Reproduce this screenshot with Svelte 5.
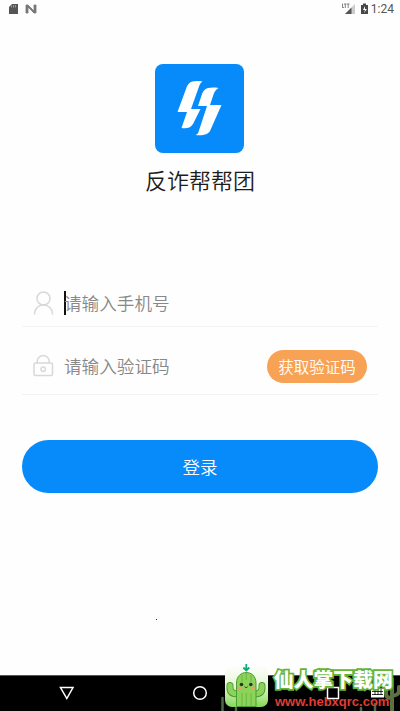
<script>
  let phone = '';
  let code = '';

  function handleSubmit(e) {
    e.preventDefault();
  }
</script>

<div class="screen">
  <header class="status-bar">
    <svg class="status-left" width="40" height="18" viewBox="0 0 40 18">
      <path d="M9 7l3-3h6v10H9z" fill="#555" />
      <path d="M11.500 5.500v2M13.500 5v2.500M15.500 5v2.500" stroke="#aaa" stroke-width=".8" />
      <path d="M26 13V5h2l6 6V5h2v8h-2l-6-6v6z" fill="#777" stroke="#777" stroke-width=".8" />
    </svg>
    <div class="status-right">
      <svg width="32" height="18" viewBox="0 0 32 18">
        <path d="M3.500 3.500v4h1.500M5 4h2.500M6.300 4v4M8 4h2.500M9.200 4v4" stroke="#666" stroke-width=".8" fill="none" />
        <path d="M6 14L16 4v10z" fill="#ccc" />
        <path d="M6 14l6.500-6.500V14z" fill="#555" />
        <path d="M22 5h2V3.500h3V5h2v9h-7z" fill="#484848" />
        <path d="M26 6l-2 4h2l-1 3 3-4h-2z" fill="#fff" />
      </svg>
      <span class="time">1:24</span>
    </div>
  </header>

  <main class="content">
    <div class="logo">
      <svg width="89" height="89" viewBox="0 0 89 89">
        <path d="M47.500 17.500c-6-1-11-.5-13.500 2-1.500 1.500-2.500 3.500-3 5.500L22.500 48H32l-5.500 16c6 .7 9.500-.5 11.500-4l7.500-15H36l7.500-21c1-3 1.500-5 4-6.500z" fill="#fff" />
        <path d="M63.500 24c-6-1-11.500-.5-14 2-1.500 1.500-2.500 3.500-3 5.500L43 42h9l-8.500 26c-.5 1.500-1.500 2.500-3 3 8 .7 12.500-.5 14.500-4L66.500 41H55l3.500-10.500c1-3 2.500-5 5-6.500z" fill="#fff" />
      </svg>
    </div>
    <h1 class="title">反诈帮帮团</h1>

    <form class="login-form" on:submit={handleSubmit}>
      <label class="field">
        <svg class="field-icon" width="22" height="26" viewBox="0 0 22 26" fill="none" stroke="#d8d8d8" stroke-width="1.500">
          <circle cx="11.500" cy="8.500" r="6.500" />
          <path d="M2.500 24.500c0-6 4-9.500 9-9.500s9 3.500 9 9.500" />
        </svg>
        <span class="caret"></span>
        <input type="text" bind:value={phone} placeholder="请输入手机号" />
      </label>
      <label class="field code-field">
        <svg class="field-icon" width="22" height="26" viewBox="0 0 22 26" fill="none" stroke="#d8d8d8" stroke-width="1.500">
          <rect x="2" y="10" width="18.500" height="12.500" rx="1.500" />
          <path d="M5.200 10V8.500a6 6 0 0 1 12 0V10" />
          <circle cx="11.200" cy="16.200" r="2.200" />
        </svg>
        <input type="text" bind:value={code} placeholder="请输入验证码" />
        <button type="button" class="code-btn">获取验证码</button>
      </label>
      <button type="submit" class="login-btn">登录</button>
    </form>
    <span class="speck"></span>
  </main>

  <nav class="nav-bar">
    <svg width="400" height="36" viewBox="0 0 400 36" fill="none" stroke="#fff" stroke-width="1.500">
      <path d="M60.500 12.500h12.500l-6.200 11z" />
      <circle cx="200" cy="18" r="6.300" />
      <path d="M327.500 12.500h11v11h-11z" />
      <path d="M371 13.500h13v9h-13z" fill="#fff" stroke="none" />
      <path d="M372 16.500h11M372 19.500h11M375 14v6M378 14v6M381 14v6" stroke="#000" stroke-width=".8" />
      <g stroke="#526747" stroke-width="2.500" stroke-linecap="round">
        <path d="M222.500 23v13M236 33v3M361 33v3M375 29v7" />
        <path d="M392 4v32M386 14v5q0 4 6 4M399 12v4q0 4-7 5" stroke="#5c7044" stroke-width="4" />
      </g>
    </svg>
  </nav>

  <div class="watermark">
    <svg class="cactus" width="44" height="48" viewBox="0 0 44 48">
      <defs>
        <linearGradient id="tile" x1="0" y1="0" x2="0" y2="1">
          <stop offset="0" stop-color="#fefefe" />
          <stop offset=".5" stop-color="#e3f7cd" />
          <stop offset="1" stop-color="#83d854" />
        </linearGradient>
      </defs>
      <rect x="0" y="3" width="43" height="41" rx="7" fill="url(#tile)" />
      <g fill="none" stroke-linecap="round">
        <path d="M5 22.500v2.500q0 6 8 6M37 22.500v2.500q0 6-8 6" stroke="#499d35" stroke-width="7" />
        <path d="M5 22.500v2.500q0 6 8 6M37 22.500v2.500q0 6-8 6" stroke="#8dd35a" stroke-width="5.200" />
      </g>
      <path d="M11.500 43.500V20c0-14 19.500-14 19.500 0v23.500z" fill="#8dd35a" stroke="#499d35" />
      <path d="M17 12v7M21.300 10v7M26 12v7M17 30v13M21.300 30v13M26 30v13" stroke="#62b444" stroke-width=".9" fill="none" />
      <circle cx="16.500" cy="21.500" r="1.800" fill="#263823" />
      <circle cx="25.800" cy="21.500" r="1.800" fill="#263823" />
      <circle cx="14.500" cy="25" r="1.800" fill="#ef9b72" />
      <circle cx="28" cy="25" r="1.800" fill="#ef9b72" />
      <path d="M19.700 23.500q1.500 3 3 0" stroke="#263823" fill="none" />
      <path d="M21.300 1v6M18.300 4.500l3 3 3-3" stroke="#12a77b" stroke-width="1.800" fill="none" />
    </svg>
    <div class="brand">
      <span class="brand-name">仙人掌下载网</span>
      <span class="brand-url">www.hebxqrc.com</span>
    </div>
  </div>
</div>

<style>
  :global(body) {
    background: #fff;
  }

  .screen {
    position: relative;
    display: flex;
    flex-direction: column;
    width: 400px;
    height: 711px;
    overflow: hidden;
    background: #fefefe;
    font-family: "Noto Sans CJK SC", sans-serif;
  }

  .status-bar {
    display: flex;
    justify-content: space-between;
    height: 18px;
  }

  .status-right {
    display: flex;
    padding-right: 6px;
  }

  .time {
    color: #555;
    font: 12px/18px Roboto, sans-serif;
  }

  .content {
    position: relative;
    display: flex;
    flex: 1;
    flex-direction: column;
    align-items: center;
    padding: 46px 22px 0;
  }

  .logo {
    width: 89px;
    height: 89px;
    margin-right: 1px;
    border-radius: 8px;
    background: #078bfa;
  }

  .title {
    margin: 9px 0 0;
    color: #1c1c1c;
    font-size: 22px;
    font-weight: 350;
    line-height: 34px;
  }

  .login-form {
    width: 356px;
    margin-top: 84px;
  }

  .field {
    display: flex;
    align-items: center;
    box-sizing: border-box;
    height: 47px;
    padding: 0 11px 0 10px;
    border-bottom: 1px solid #f3f3f3;
  }

  .code-field {
    height: 68px;
    padding-top: 11px;
  }

  .field-icon {
    flex: none;
    margin-right: 10px;
  }

  .caret {
    width: 2px;
    height: 24px;
    margin-right: -2px;
    background: #111;
  }

  input {
    flex: 1;
    min-width: 0;
    padding: 0;
    border: 0;
    outline: none;
    background: transparent;
    font-family: inherit;
    font-size: 17.600px;
    font-weight: 350;
    line-height: 26px;
  }

  input::placeholder {
    color: #888;
  }

  button {
    padding: 0;
    border: 0;
    color: #fff;
    font-family: inherit;
    font-weight: 350;
  }

  .code-btn {
    width: 100px;
    height: 33px;
    border-radius: 17px;
    background: #f8a256;
    font-size: 15.500px;
  }

  .login-btn {
    width: 356px;
    height: 53px;
    margin-top: 45px;
    border-radius: 27px;
    background: #078bfa;
    font-size: 17.500px;
  }

  .speck {
    position: absolute;
    top: 601px;
    left: 156px;
    width: 1px;
    height: 1px;
    background: #222;
  }

  .nav-bar {
    height: 36px;
    background: #000;
    box-shadow: inset 0 1px #555;
  }

  .nav-bar svg {
    display: block;
  }

  .watermark {
    position: absolute;
    top: 663px;
    left: 225px;
    display: flex;
  }

  .brand {
    display: flex;
    flex-direction: column;
    margin-left: 5px;
    white-space: nowrap;
  }

  .brand-name {
    height: 30px;
    color: #fff;
    font-size: 19.800px;
    font-weight: 900;
    line-height: 31px;
    paint-order: stroke fill;
    -webkit-text-stroke: 3.500px #64b534;
  }

  .brand-url {
    margin-left: 1px;
    color: #e33b32;
    font: bold 13px/17px "Liberation Sans", sans-serif;
  }
</style>
